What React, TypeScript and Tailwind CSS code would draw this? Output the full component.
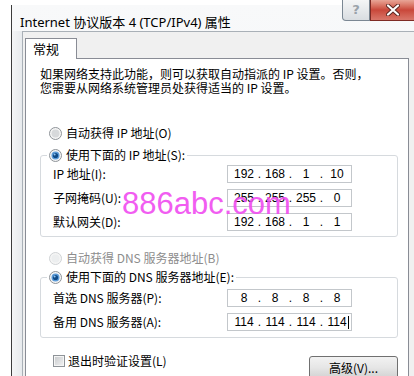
const cjk = "font-['Noto_Sans_CJK_SC',sans-serif]";

const Radio = ({ checked, disabled }: { checked?: boolean; disabled?: boolean }) => (
  <svg width="13" height="13" viewBox="0 0 13 13" className="shrink-0">
    <circle cx="6.5" cy="6.5" r="6" fill="#f5f5f5" stroke={disabled ? "#cfd2d4" : "#8e9398"} />
    {checked ? (
      <>
        <circle cx="6.5" cy="6.5" r="4" fill="#5b9bd8" />
        <circle cx="6.5" cy="6.5" r="2.6" fill="#0f4a86" />
        <circle cx="5.6" cy="5.5" r="1" fill="#8fc4f0" />
      </>
    ) : (
      <circle cx="6.5" cy="6.5" r="4" fill={disabled ? "#eceeef" : "#d7d9db"} />
    )}
  </svg>
);

const IpBox = ({ parts, caret }: { parts: string[]; caret?: boolean }) => (
  <div className="flex h-[18px] w-[125px] items-center border border-[#c3c7cb] bg-white pl-[4px] font-['Liberation_Sans',sans-serif] text-[12px] text-black">
    {parts.map((p, i) => (
      <div key={i} className="flex">
        <span className="w-[24px] text-center">
          <span className="relative">
            {p}
            {caret && i === 3 && <span className="absolute -right-[2px] top-[1px] h-[13px] w-px bg-black" />}
          </span>
        </span>
        {i < 3 && <span className="w-[7px] text-center">.</span>}
      </div>
    ))}
  </div>
);

const Row = ({ label, parts, caret }: { label: string; parts: string[]; caret?: boolean }) => (
  <div className="flex h-[18px] items-center">
    <span className="w-[174px] leading-[14px]">{label}</span>
    <IpBox parts={parts} caret={caret} />
  </div>
);

export default function App() {
  return (
    <div className={`relative h-[376px] w-[414px] overflow-hidden bg-white text-[12px] text-black ${cjk}`}>
      <div className="ml-[11px] mt-[5px] flex h-[371px] flex-col border-l border-[#3c3c3c] bg-gradient-to-b from-[#f8f9fa] to-[#eef1f4]">
        {/* title */}
        <div className="h-[30px] pl-[8px] pt-[9px] font-['Noto_Sans','Noto_Sans_CJK_SC',sans-serif] text-[13px] leading-[17px] text-black">
          Internet 协议版本 4 (TCP/IPv4) 属性
        </div>

        <div className="flex flex-1">
          <div className="w-[10px] bg-gradient-to-r from-[#f4f5f6] to-[#e7eaed]" />
          <div className="flex-1 border-l border-t border-[#a9b0b7] bg-[#f0f0f0] pl-[2px] pt-[6px]">
            {/* tab */}
            <div className="relative z-10 -mb-px h-[21px] w-[52px] border border-b-0 border-[#898c95] bg-white pl-[7px] text-[13px] leading-[20px]">
              常规
            </div>

            {/* panel */}
            <div className="h-[400px] w-[384px] border border-[#898c95] bg-white pl-[14px] pr-[10px] pt-[8px]">
              <p className="leading-[14px]">
                如果网络支持此功能，则可以获取自动指派的 IP 设置。否则，
                <br />
                您需要从网络系统管理员处获得适当的 IP 设置。
              </p>

              <div className="ml-[9px] mt-[31px] flex h-[14px] items-center gap-[4px] leading-[14px]">
                <Radio />
                <span>自动获得 IP 地址(O)</span>
              </div>

              <fieldset className="mt-[8px] rounded-[3px] border border-[#d6dade] pb-[5px] pl-[6px]">
                <legend className="px-[2px]">
                  <div className="flex h-[14px] items-center gap-[4px] leading-[14px]">
                    <Radio checked />
                    <span>使用下面的 IP 地址(S):</span>
                  </div>
                </legend>
                <div className="ml-[6px] mt-[3px] flex flex-col gap-[6px]">
                  <Row label="IP 地址(I):" parts={["192", "168", "1", "10"]} />
                  <Row label="子网掩码(U):" parts={["255", "255", "255", "0"]} />
                  <Row label="默认网关(D):" parts={["192", "168", "1", "1"]} />
                </div>
              </fieldset>

              <div className="ml-[9px] mt-[14px] flex h-[14px] items-center gap-[4px] leading-[14px] text-[#8d8d8d]">
                <Radio disabled />
                <span>自动获得 DNS 服务器地址(B)</span>
              </div>

              <fieldset className="mt-[5px] rounded-[3px] border border-[#d6dade] pb-[6px] pl-[6px]">
                <legend className="px-[2px]">
                  <div className="flex h-[14px] items-center gap-[4px] leading-[14px]">
                    <Radio checked />
                    <span>使用下面的 DNS 服务器地址(E):</span>
                  </div>
                </legend>
                <div className="ml-[6px] mt-[5px] flex flex-col gap-[6px]">
                  <Row label="首选 DNS 服务器(P):" parts={["8", "8", "8", "8"]} />
                  <Row label="备用 DNS 服务器(A):" parts={["114", "114", "114", "114"]} caret />
                </div>
              </fieldset>

              <div className="mt-[16px] flex items-start justify-between">
                <div className="ml-[13px] flex h-[14px] items-center gap-[3px] leading-[14px]">
                  <span className="flex h-[12px] w-[12px] items-center justify-center border border-[#8e9398] bg-[#f5f5f5]">
                    <span className="h-[8px] w-[8px] bg-gradient-to-br from-[#cbcdcf] to-[#eeeff0]" />
                  </span>
                  <span>退出时验证设置(L)</span>
                </div>
                <button className="mt-[2px] h-[23px] w-[89px] rounded-[3px] border border-[#707070] bg-gradient-to-b from-[#f2f2f2] via-[#e6e6e6] to-[#d2d2d2] text-[12px] leading-[20px] text-black">
                  高级(V)...
                </button>
              </div>
            </div>
          </div>
        </div>
      </div>

      {/* caption buttons */}
      <div className="absolute left-[342px] top-0 flex h-[21px] w-[28px] items-center justify-center rounded-bl-[4px] border border-t-0 border-[#7b8793] bg-gradient-to-b from-[#f4f5f6] to-[#d9dde1] font-['DejaVu_Sans',sans-serif] text-[13px] font-bold text-[#9aa2aa]">
        ?
      </div>
      <div className="absolute left-[370px] top-0 flex h-[21px] w-[46px] items-center justify-center border border-t-0 border-[#7e2a24] bg-gradient-to-b from-[#e8a597] via-[#c9473a] to-[#d9766a]">
        <svg width="14" height="12" viewBox="0 0 14 12">
          <path d="M2 1.5 L12 10.5 M12 1.5 L2 10.5" stroke="#5a2520" strokeWidth="4" strokeLinecap="round" />
          <path d="M2 1.5 L12 10.5 M12 1.5 L2 10.5" stroke="#ffffff" strokeWidth="2.2" strokeLinecap="round" />
        </svg>
      </div>

      {/* watermark */}
      <div className="pointer-events-none absolute left-[122px] top-[188px] font-['Liberation_Sans',sans-serif] text-[31px] leading-none text-[#f04cf0] opacity-90">
        886abc.com
      </div>
    </div>
  );
}
